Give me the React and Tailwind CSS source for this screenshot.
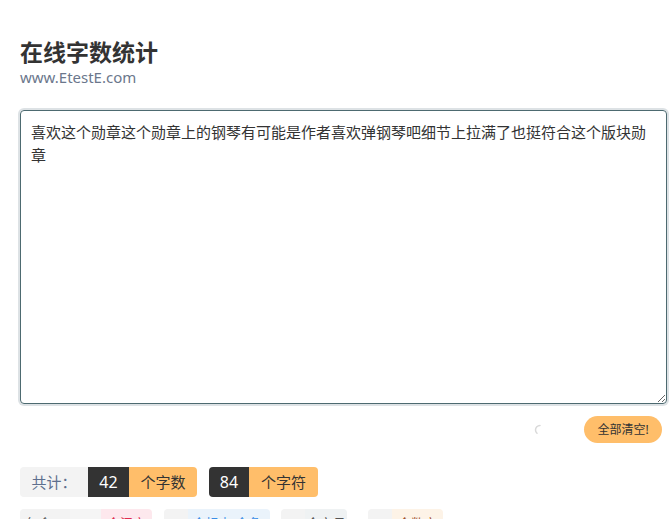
import React from "react";

const font = { fontFamily: '"Noto Sans", "Noto Sans CJK SC", sans-serif' };

export default function App() {
  const text =
    "喜欢这个勋章这个勋章上的钢琴有可能是作者喜欢弹钢琴吧细节上拉满了也挺符合这个版块勋章";
  return (
    <div
      className="min-h-[519px] w-[670px] overflow-hidden bg-white pl-5 pr-[3px] pt-[37px] text-[#333]"
      style={font}
    >
      <h1 className="text-[23px] font-bold leading-[30px] text-[#333]">在线字数统计</h1>
      <div className="text-[15px] leading-[20px] text-[#6b778c]">www.EtestE.com</div>

      <textarea
        className="mt-[23px] block h-[294px] w-full resize rounded-[4px] border border-[#4d6a70] px-[10px] py-[10px] text-[15px] leading-[23px] text-[#333] shadow-[0_0_0_2px_#dde2e5] outline-none"
        style={font}
        defaultValue={text}
      />

      <div className="mt-[12px] flex h-[27px] items-center justify-end pr-[5px]">
        <svg width="12" height="12" viewBox="0 0 12 12" className="mr-[38px]">
          <path d="M6 1.5 A4.5 4.5 0 0 0 1.5 6 A4.5 4.5 0 0 0 3 9.3" fill="none" stroke="#d9d9d9" strokeWidth="1.5" strokeLinecap="round" />
        </svg>
        <button className="h-[27px] w-[78px] rounded-full bg-[#ffbe6a] text-[12px] text-[#333]">
          全部清空!
        </button>
      </div>

      <div className="mt-[24px] flex h-[30px] items-stretch text-[15px]">
        <div className="flex items-stretch overflow-hidden rounded-[4px]">
          <span className="flex w-[68px] items-center justify-center bg-[#f3f3f3] text-[#5e6f8e]">共计：</span>
          <span className="flex w-[41px] items-center justify-center bg-[#333] text-[16px] text-white">42</span>
          <span className="flex w-[68px] items-center justify-center bg-[#ffbe6a] text-[#333]">个字数</span>
        </div>
        <div className="ml-[12px] flex items-stretch overflow-hidden rounded-[4px]">
          <span className="flex w-[40px] items-center justify-center bg-[#333] text-[16px] text-white">84</span>
          <span className="flex w-[69px] items-center justify-center bg-[#ffbe6a] text-[#333]">个字符</span>
        </div>
      </div>

      <div className="mt-[12px] flex h-[30px] items-stretch text-[13px]">
        <div className="flex items-stretch overflow-hidden rounded-[4px]">
          <span className="flex w-[50px] items-center justify-center bg-[#f3f3f3] text-[#555]">包含：</span>
          <span className="flex w-[31px] items-center justify-center bg-[#f5f5f5] text-[#555]">42</span>
          <span className="flex w-[51px] items-center justify-center bg-[#fde8ed] text-[#e02a4e]">个汉字</span>
        </div>
        <div className="ml-[12px] flex items-stretch overflow-hidden rounded-[4px]">
          <span className="flex w-[24px] items-center justify-center bg-[#f3f3f3] text-[#555]">0</span>
          <span className="flex w-[82px] items-center justify-center bg-[#eaf3fb] text-[#3a8ee6]">个标点(全角)</span>
        </div>
        <div className="ml-[11px] flex items-stretch overflow-hidden rounded-[4px]">
          <span className="flex w-[24px] items-center justify-center bg-[#f3f3f3] text-[#555]">0</span>
          <span className="flex w-[42px] items-center justify-center bg-[#eff2f3] text-[#555]">个字母</span>
        </div>
        <div className="ml-[21px] flex items-stretch overflow-hidden rounded-[4px]">
          <span className="flex w-[24px] items-center justify-center bg-[#f3f3f3] text-[#555]">0</span>
          <span className="flex w-[51px] items-center justify-center bg-[#fdf3e7] text-[#a0522d]">个数字</span>
        </div>
      </div>
    </div>
  );
}
